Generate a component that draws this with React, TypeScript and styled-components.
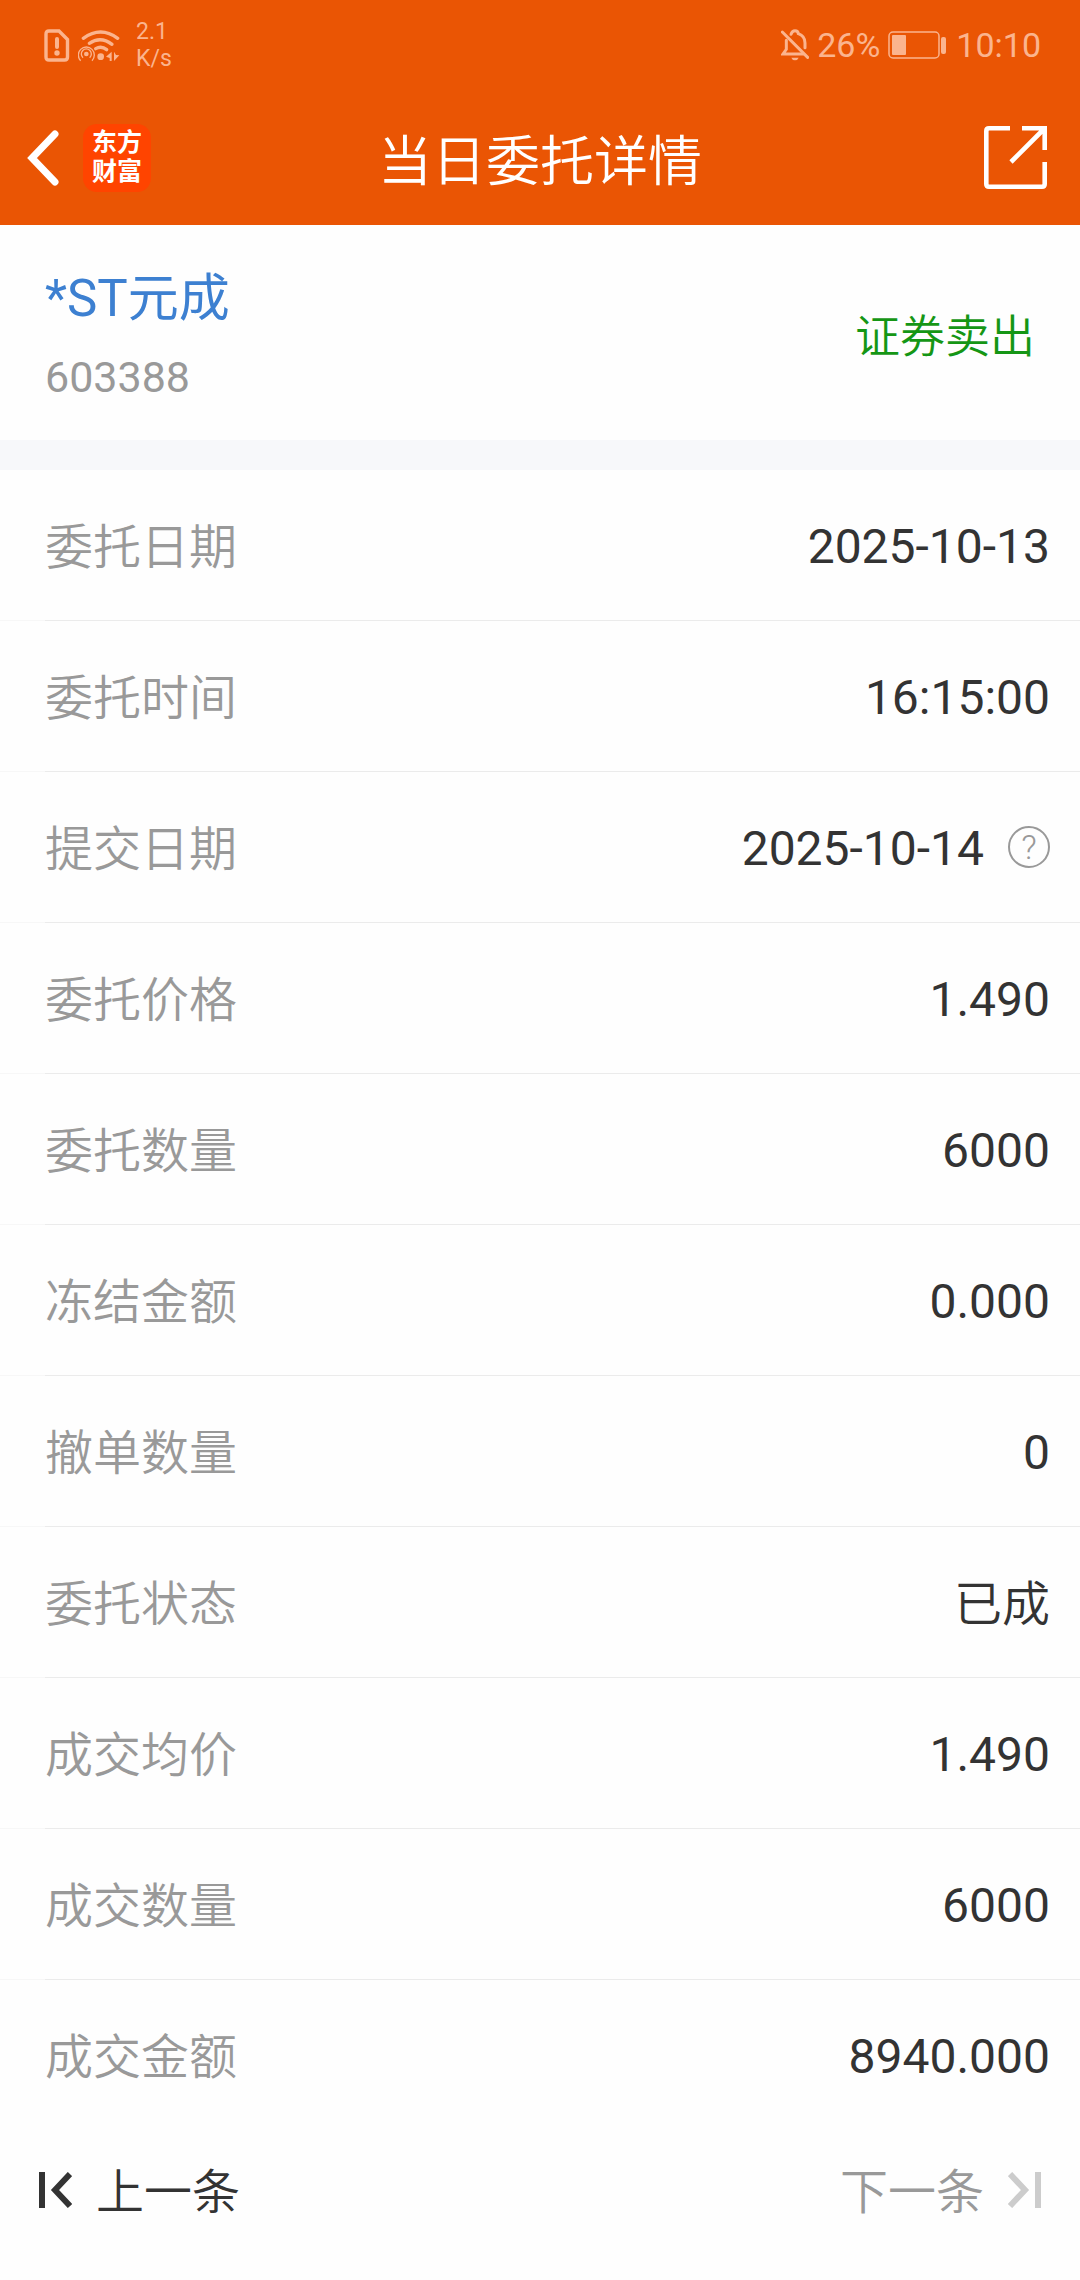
import React from "react";
import styled, { createGlobalStyle } from "styled-components";

const GlobalStyle = createGlobalStyle`
  * {
    box-sizing: border-box;
  }

  body {
    margin: 0;
    background: #fefefe;
    color: #333333;
    font-family: Roboto, "Noto Sans CJK SC", sans-serif;
    font-size: 48px;
    font-weight: 400;
  }

  button {
    padding: 0;
    border: 0;
    background: none;
    color: inherit;
    font: inherit;
    cursor: pointer;
  }

  svg {
    display: block;
    flex: none;
  }
`;

const Header = styled.header`
  background: #ea5504;
  color: #ffffff;
`;

const StatusBar = styled.div`
  display: flex;
  align-items: center;
  justify-content: space-between;
  height: 90px;
  padding: 0 39px 0 44px;
  color: #fbb48e;
`;

const StatusGroup = styled.div`
  display: flex;
  align-items: center;
  gap: 8px;
`;

const StatusText = styled.span`
  font-size: 34px;
  line-height: 42px;
`;

const Clock = styled(StatusText)`
  margin-left: 2px;
`;

const NetworkSpeed = styled.div`
  display: flex;
  flex-direction: column;
  margin-left: 8px;
  font-size: 23px;
  line-height: 27px;
`;

const NavBar = styled.nav`
  display: grid;
  grid-template-columns: 1fr auto 1fr;
  align-items: center;
  height: 135px;
  padding: 0 27px;
`;

const NavStart = styled.div`
  display: flex;
  align-items: center;
  gap: 24px;
`;

const ShareButton = styled.button`
  justify-self: end;
  padding: 6px;
`;

const Logo = styled.span`
  display: flex;
  flex-direction: column;
  align-items: center;
  justify-content: center;
  width: 68px;
  height: 68px;
  padding-bottom: 2px;
  border-radius: 14px;
  background: #ff4400;
  font-size: 25px;
  font-weight: 700;
  line-height: 29px;
`;

const Title = styled.h1`
  margin: 0;
  padding-top: 10px;
  font-size: 54px;
  font-weight: 350;
  line-height: 72px;
`;

const Summary = styled.section`
  display: flex;
  align-items: center;
  justify-content: space-between;
  padding: 38px 45px 27px;
  border-bottom: 30px solid #f7f8fa;
`;

const Stock = styled.div`
  display: flex;
  flex-direction: column;
  gap: 6px;
  line-height: 72px;
`;

const StockName = styled.a`
  color: #3d80d1;
  font-size: 51px;
  text-decoration: none;
`;

const StockCode = styled.span`
  color: #999999;
  font-size: 43px;
`;

const Side = styled.span`
  padding-bottom: 10px;
  color: #159615;
  font-size: 45px;
  font-weight: 350;
`;

const Details = styled.dl`
  margin: 0;
`;

const Row = styled.div`
  display: flex;
  align-items: center;
  justify-content: space-between;
  height: 151px;
  padding: 0 30px 1px 45px;
  line-height: 72px;

  &:not(:last-child) {
    background: linear-gradient(to right, #f7f7f7 45px, #ebebeb 45px) bottom / 100% 1px no-repeat;
  }
`;

const Label = styled.dt`
  padding-top: 6px;
  color: #999999;
  font-weight: 350;
`;

const Value = styled.dd`
  display: flex;
  align-items: center;
  gap: 24px;
  margin: 0;
`;

const ValueText = styled.span<{ $word?: boolean }>`
  padding-top: ${({ $word }) => ($word ? 6 : 4)}px;
  font-weight: ${({ $word }) => ($word ? 350 : 400)};
`;

const HelpButton = styled.button`
  display: flex;
  align-items: center;
  justify-content: center;
  width: 42px;
  height: 42px;
  border: 2px solid #999999;
  border-radius: 50%;
  color: #999999;
  font-size: 34px;
  font-weight: 300;
  line-height: 38px;
`;

const Pager = styled.footer`
  display: flex;
  align-items: center;
  justify-content: space-between;
  height: 118px;
  padding: 0 39px;
`;

const PagerButton = styled.button`
  display: flex;
  align-items: center;
  gap: 24px;
  font-weight: 350;
  line-height: 72px;

  &:disabled {
    color: #999999;
    cursor: default;
  }

  &:disabled svg {
    color: #cccccc;
  }
`;

const PagerText = styled.span`
  padding-top: 6px;
`;

const SimIcon = () => (
  <svg width="26" height="33" viewBox="0 0 26 33" fill="none" stroke="currentColor" strokeWidth="3.400">
    <path d="M5 2H15L23.500 10.500V28Q23.500 31 20.500 31H5Q2 31 2 28V5Q2 2 5 2Z" />
    <path d="M13 10V18" strokeWidth="4" strokeLinecap="round" />
    <circle cx="13" cy="24" r="2.700" fill="currentColor" stroke="none" />
  </svg>
);

const WifiIcon = () => (
  <svg width="42" height="33" viewBox="234 84 126 99" fill="none" stroke="currentColor">
    <path d="M250 112Q302 74 353 112" strokeWidth="10" strokeLinecap="round" />
    <path d="M268 127Q302 104 336 130" strokeWidth="10" strokeLinecap="round" />
    <path d="M287 143Q304 133 320 146" strokeWidth="10" strokeLinecap="round" />
    <circle cx="302" cy="167" r="10" fill="currentColor" stroke="none" />
    <circle cx="259" cy="159" r="7" fill="currentColor" stroke="none" />
    <path d="M249 170A15 15 0 1 1 269 170" strokeWidth="4" />
    <path d="M242 179A24 24 0 1 1 276 179" strokeWidth="4" />
    <path d="M335 152V180H329V171L318 167ZM342 152V180L358 163L348 162Z" fill="currentColor" stroke="none" />
  </svg>
);

const MutedBellIcon = () => (
  <svg width="28" height="32" viewBox="186 88 84 96" fill="none" stroke="currentColor" strokeWidth="9" strokeLinecap="round">
    <path d="M190 97L266 173" />
    <path d="M202 122V149L192 163H252" />
    <path d="M216 104Q219 93 228 93Q237 93 238 102Q258 109 258 130V144" />
    <path d="M217 174H239Q236 182 228 182Q220 182 217 174Z" fill="currentColor" stroke="none" />
  </svg>
);

const BatteryIcon = () => (
  <svg width="58" height="28" viewBox="0 0 58 28" fill="currentColor">
    <rect x="1" y="1" width="50" height="26" rx="4" fill="none" stroke="currentColor" strokeWidth="1.500" />
    <rect x="4" y="4" width="14" height="20" rx="1" />
    <rect x="53" y="6" width="5" height="17" rx="2" />
  </svg>
);

const BackIcon = () => (
  <svg width="32" height="56" viewBox="0 0 32 56" fill="none" stroke="currentColor" strokeWidth="7" strokeLinecap="round">
    <path d="M28 4L5 28L28 52" />
  </svg>
);

const ShareIcon = () => (
  <svg width="63" height="63" viewBox="0 0 63 63" fill="none" stroke="currentColor" strokeWidth="4.600">
    <path d="M26 2.300H5Q2.300 2.300 2.300 5V58Q2.300 60.700 5 60.700H58Q60.700 60.700 60.700 58V36" />
    <path d="M38 2.300H60.700V24M60 3L27 36" />
  </svg>
);

const FirstIcon = () => (
  <svg width="33" height="36" viewBox="0 0 33 36" fill="none" stroke="currentColor" strokeWidth="6">
    <path d="M3 0V36M31 2L16 18L31 34" />
  </svg>
);

const LastIcon = () => (
  <svg width="33" height="36" viewBox="0 0 33 36" fill="none" stroke="currentColor" strokeWidth="6">
    <path d="M30 0V36M2 2L17 18L2 34" />
  </svg>
);

interface Detail {
  label: string;
  value: string;
  word?: boolean;
  help?: boolean;
}

const details: Detail[] = [
  { label: "委托日期", value: "2025-10-13" },
  { label: "委托时间", value: "16:15:00" },
  { label: "提交日期", value: "2025-10-14", help: true },
  { label: "委托价格", value: "1.490" },
  { label: "委托数量", value: "6000" },
  { label: "冻结金额", value: "0.000" },
  { label: "撤单数量", value: "0" },
  { label: "委托状态", value: "已成", word: true },
  { label: "成交均价", value: "1.490" },
  { label: "成交数量", value: "6000" },
  { label: "成交金额", value: "8940.000" },
];

export default function App() {
  return (
    <>
      <GlobalStyle />
      <Header>
        <StatusBar>
          <StatusGroup>
            <SimIcon />
            <WifiIcon />
            <NetworkSpeed>
              <span>2.1</span>
              <span>K/s</span>
            </NetworkSpeed>
          </StatusGroup>
          <StatusGroup>
            <MutedBellIcon />
            <StatusText>26%</StatusText>
            <BatteryIcon />
            <Clock>10:10</Clock>
          </StatusGroup>
        </StatusBar>
        <NavBar>
          <NavStart>
            <button type="button" aria-label="返回">
              <BackIcon />
            </button>
            <Logo>
              <span>东方</span>
              <span>财富</span>
            </Logo>
          </NavStart>
          <Title>当日委托详情</Title>
          <ShareButton type="button" aria-label="分享">
            <ShareIcon />
          </ShareButton>
        </NavBar>
      </Header>
      <main>
        <Summary>
          <Stock>
            <StockName href="#">*ST元成</StockName>
            <StockCode>603388</StockCode>
          </Stock>
          <Side>证券卖出</Side>
        </Summary>
        <Details>
          {details.map(({ label, value, word, help }) => (
            <Row key={label}>
              <Label>{label}</Label>
              <Value>
                <ValueText $word={word}>{value}</ValueText>
                {help && <HelpButton type="button">?</HelpButton>}
              </Value>
            </Row>
          ))}
        </Details>
      </main>
      <Pager>
        <PagerButton type="button">
          <FirstIcon />
          <PagerText>上一条</PagerText>
        </PagerButton>
        <PagerButton type="button" disabled>
          <PagerText>下一条</PagerText>
          <LastIcon />
        </PagerButton>
      </Pager>
    </>
  );
}
